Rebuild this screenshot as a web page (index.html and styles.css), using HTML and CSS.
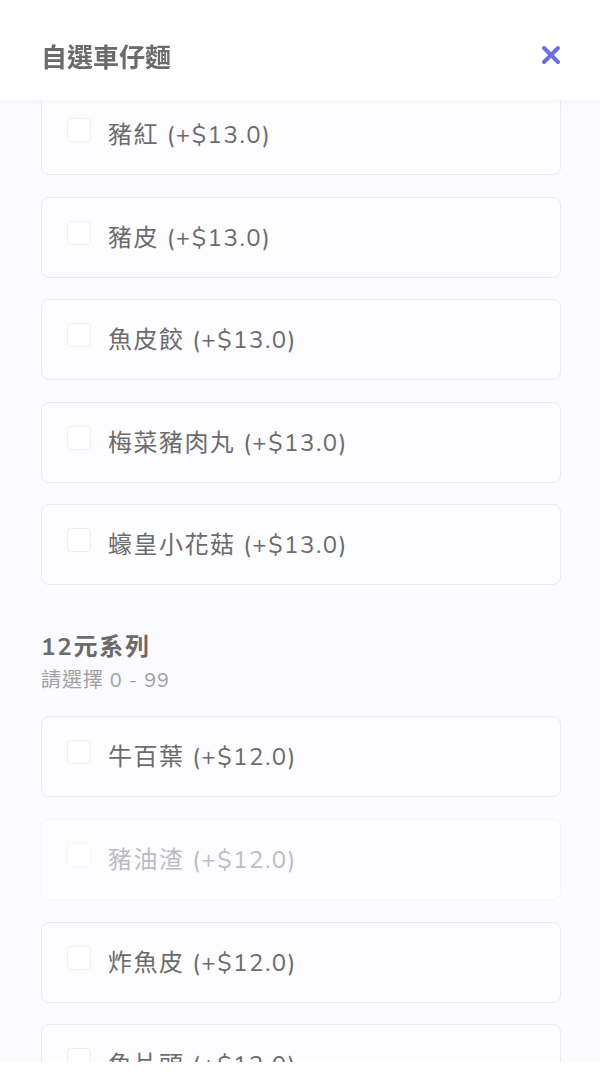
FILE: index.html
```html
<!DOCTYPE html>
<html lang="zh-Hant">
<head>
    <meta charset="UTF-8">
    <meta name="viewport" content="width=device-width, initial-scale=1.0">
    <title>自選車仔麵</title>
    <link rel="stylesheet" href="styles.css">
</head>
<body>

    <div class="cabecalho">
        <h1>自選車仔麵</h1>
        <button class="fechar" type="button" aria-label="關閉">
            <svg width="20" height="20" viewBox="0 0 20 20">
                <path d="M3 3 L17 17 M17 3 L3 17" stroke="#6d6ee0" stroke-width="4" stroke-linecap="round" fill="none"/>
            </svg>
        </button>
    </div>

    <div class="conteudo">
        <div class="lista">
            <label class="opcao"><span class="caixa"></span><span class="texto">豬紅 (+$13.0)</span></label>
            <label class="opcao"><span class="caixa"></span><span class="texto">豬皮 (+$13.0)</span></label>
            <label class="opcao"><span class="caixa"></span><span class="texto">魚皮餃 (+$13.0)</span></label>
            <label class="opcao"><span class="caixa"></span><span class="texto">梅菜豬肉丸 (+$13.0)</span></label>
            <label class="opcao"><span class="caixa"></span><span class="texto">蠔皇小花菇 (+$13.0)</span></label>
        </div>

        <div class="grupo">
            <h2>12元系列</h2>
            <p class="dica">請選擇 0 - 99</p>
        </div>

        <div class="lista">
            <label class="opcao"><span class="caixa"></span><span class="texto">牛百葉 (+$12.0)</span></label>
            <label class="opcao desativado"><span class="caixa"></span><span class="texto">豬油渣 (+$12.0)</span></label>
            <label class="opcao"><span class="caixa"></span><span class="texto">炸魚皮 (+$12.0)</span></label>
            <label class="opcao"><span class="caixa"></span><span class="texto">魚片頭 (+$12.0)</span></label>
        </div>
    </div>

    <div class="rodape"></div>

</body>
</html>
```

FILE: styles.css
```css
body {
    margin: 0;
    background-color: #fbfaff;
    font-family: "Nunito", "Noto Sans", "Noto Sans CJK TC", sans-serif;
    color: #6b6b6b;
    overflow: hidden;
    height: 1081px;
}
.cabecalho {
    position: fixed;
    top: 0;
    left: 0;
    right: 0;
    height: 100px;
    box-sizing: border-box;
    background-color: #ffffff;
    display: flex;
    align-items: center;
    justify-content: space-between;
    padding: 10px 38px 0 41px;
    box-shadow: 0 2px 6px rgba(0, 0, 0, 0.03);
    z-index: 2;
}
.cabecalho h1 {
    margin: 0;
    font-size: 26px;
    font-weight: bold;
    color: #6b6b6b;
    font-family: "Noto Sans CJK TC", sans-serif;
}
.fechar {
    background: none;
    border: none;
    padding: 0;
    width: 22px;
    height: 22px;
    display: flex;
    align-items: center;
    justify-content: center;
    cursor: pointer;
}
.conteudo {
    padding: 94px 39px 0 41px;
}
.lista {
    display: flex;
    flex-direction: column;
    gap: 21.6px;
}
.opcao {
    height: 81px;
    box-sizing: border-box;
    border: 1px solid #ebeaef;
    border-radius: 8px;
    background-color: #fdfcff;
    display: flex;
    align-items: flex-start;
    padding: 23px 25px 0 25px;
}
.caixa {
    width: 24px;
    height: 24px;
    box-sizing: border-box;
    border: 1px solid #f0eff3;
    border-radius: 4px;
    background-color: #ffffff;
    margin-right: 17px;
    flex-shrink: 0;
}
.texto {
    font-size: 24px;
    line-height: 32px;
    letter-spacing: 1.5px;
    color: #6b6b6b;
    margin-top: 1px;
}
.desativado {
    border-color: #f5f4f8;
}
.desativado .caixa {
    border-color: #f7f6fa;
}
.desativado .texto {
    color: #bdbcc0;
}
.grupo {
    padding: 47px 0 23px 0;
}
.grupo h2 {
    margin: 0;
    font-size: 24px;
    line-height: 30px;
    letter-spacing: 1.8px;
    font-weight: bold;
    color: #6b6b6b;
}
.dica {
    margin: 7px 0 0 0;
    font-size: 20px;
    line-height: 24px;
    letter-spacing: 0.9px;
    color: #a0a0a4;
}
.rodape {
    position: fixed;
    left: 0;
    right: 0;
    bottom: 0;
    height: 19px;
    background-color: #ffffff;
    z-index: 2;
}
```
